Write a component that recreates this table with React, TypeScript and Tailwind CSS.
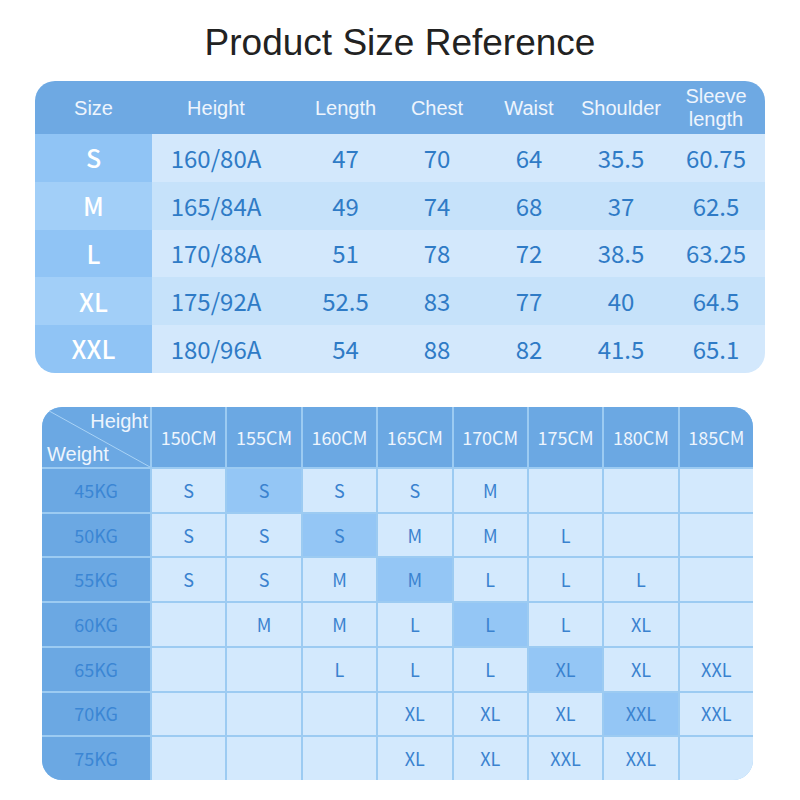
import React from 'react'

const CJK = "font-['Noto_Sans_CJK_SC','Noto_Sans',sans-serif]"
const ARIAL = "font-['Liberation_Sans',Arial,sans-serif]"

// size chart rows
const SIZES = [
  { size: 'S', vals: ['160/80A', '47', '70', '64', '35.5', '60.75'] },
  { size: 'M', vals: ['165/84A', '49', '74', '68', '37', '62.5'] },
  { size: 'L', vals: ['170/88A', '51', '78', '72', '38.5', '63.25'] },
  { size: 'XL', vals: ['175/92A', '52.5', '83', '77', '40', '64.5'] },
  { size: 'XXL', vals: ['180/96A', '54', '88', '82', '41.5', '65.1'] },
]

const HEIGHTS = ['150CM', '155CM', '160CM', '165CM', '170CM', '175CM', '180CM', '185CM']

// weight x height grid, index of highlighted cell per row
const GRID = [
  { w: '45KG', cells: ['S', 'S', 'S', 'S', 'M', '', '', ''], hi: 1 },
  { w: '50KG', cells: ['S', 'S', 'S', 'M', 'M', 'L', '', ''], hi: 2 },
  { w: '55KG', cells: ['S', 'S', 'M', 'M', 'L', 'L', 'L', ''], hi: 3 },
  { w: '60KG', cells: ['', 'M', 'M', 'L', 'L', 'L', 'XL', ''], hi: 4 },
  { w: '65KG', cells: ['', '', 'L', 'L', 'L', 'XL', 'XL', 'XXL'], hi: 5 },
  { w: '70KG', cells: ['', '', '', 'XL', 'XL', 'XL', 'XXL', 'XXL'], hi: 6 },
  { w: '75KG', cells: ['', '', '', 'XL', 'XL', 'XXL', 'XXL', ''], hi: -1 },
]

function SizeTable() {
  return (
    <div className="ml-[35px] w-[730px] h-[292px] rounded-[20px] overflow-hidden grid grid-cols-[117px_128px_111px_92px_92px_92px_98px] grid-rows-[53px_repeat(5,1fr)]">
      {['Size', 'Height', 'Length', 'Chest', 'Waist', 'Shoulder'].map((h, i) => (
        <div
          key={h}
          className={`bg-[#6ea9e3] flex items-center justify-center text-[20px] text-[#eef5fd] ${ARIAL} ${i === 2 ? 'pl-5' : ''}`}
        >
          {h}
        </div>
      ))}
      <div className={`bg-[#6ea9e3] flex flex-col items-center justify-center text-[20px] leading-[23px] text-[#eef5fd] ${ARIAL}`}>
        <span>Sleeve</span>
        <span>length</span>
      </div>
      {SIZES.map((row, r) => (
        <React.Fragment key={row.size}>
          <div
            className={`flex items-center justify-center text-[25px] font-medium text-white ${CJK} ${r % 2 === 0 ? 'bg-[#90c4f5]' : 'bg-[#a2cff8]'}`}
          >
            {row.size}
          </div>
          {row.vals.map((v, i) => (
            <div
              key={i}
              className={`flex items-center justify-center text-[24px] text-[#2f7bc6] ${CJK} ${r % 2 === 0 ? 'bg-[#d3e8fc]' : 'bg-[#c6e2fa]'} ${i === 1 ? 'pl-5' : ''}`}
            >
              {v}
            </div>
          ))}
        </React.Fragment>
      ))}
    </div>
  )
}

function WeightGrid() {
  return (
    <div className="ml-[42px] w-[711px] h-[373px] rounded-[20px] overflow-hidden bg-[#9ccbf2] grid grid-cols-[108px_repeat(8,1fr)] grid-rows-[60px_repeat(7,1fr)] gap-[2px]">
      {/* corner cell with diagonal */}
      <div className={`relative bg-[#6ba8e3] text-[20px] text-[#eef5fd] ${ARIAL}`}>
        <svg className="absolute inset-0 w-full h-full" viewBox="0 0 108 60" preserveAspectRatio="none">
          <line x1="0" y1="0" x2="108" y2="60" stroke="#a9d2f5" strokeWidth="1" />
        </svg>
        <span className="absolute right-[2px] top-[3px] leading-[22px]">Height</span>
        <span className="absolute left-[5px] bottom-[2px] leading-[22px]">Weight</span>
      </div>
      {HEIGHTS.map((h) => (
        <div key={h} className={`bg-[#6ba8e3] flex items-center justify-center text-[18px] text-[#eef5fd] ${CJK}`}>
          {h}
        </div>
      ))}
      {GRID.map((row) => (
        <React.Fragment key={row.w}>
          <div className={`bg-[#6ba8e3] flex items-center justify-center text-[18px] text-[#3b86d4] ${CJK}`}>
            {row.w}
          </div>
          {row.cells.map((c, i) => (
            <div
              key={i}
              className={`flex items-center justify-center text-[18px] text-[#3a82cf] ${CJK} ${i === row.hi ? 'bg-[#94c6f5]' : 'bg-[#d3e9fd]'}`}
            >
              {c}
            </div>
          ))}
        </React.Fragment>
      ))}
    </div>
  )
}

export default function App() {
  return (
    <div className="w-[800px] h-[800px] bg-white flex flex-col">
      <h1 className={`mt-[23px] h-[40px] text-center text-[37px] leading-[40px] text-[#222222] ${ARIAL}`}>
        Product Size Reference
      </h1>
      <div className="mt-[18px]">
        <SizeTable />
      </div>
      <div className="mt-[34px]">
        <WeightGrid />
      </div>
    </div>
  )
}
